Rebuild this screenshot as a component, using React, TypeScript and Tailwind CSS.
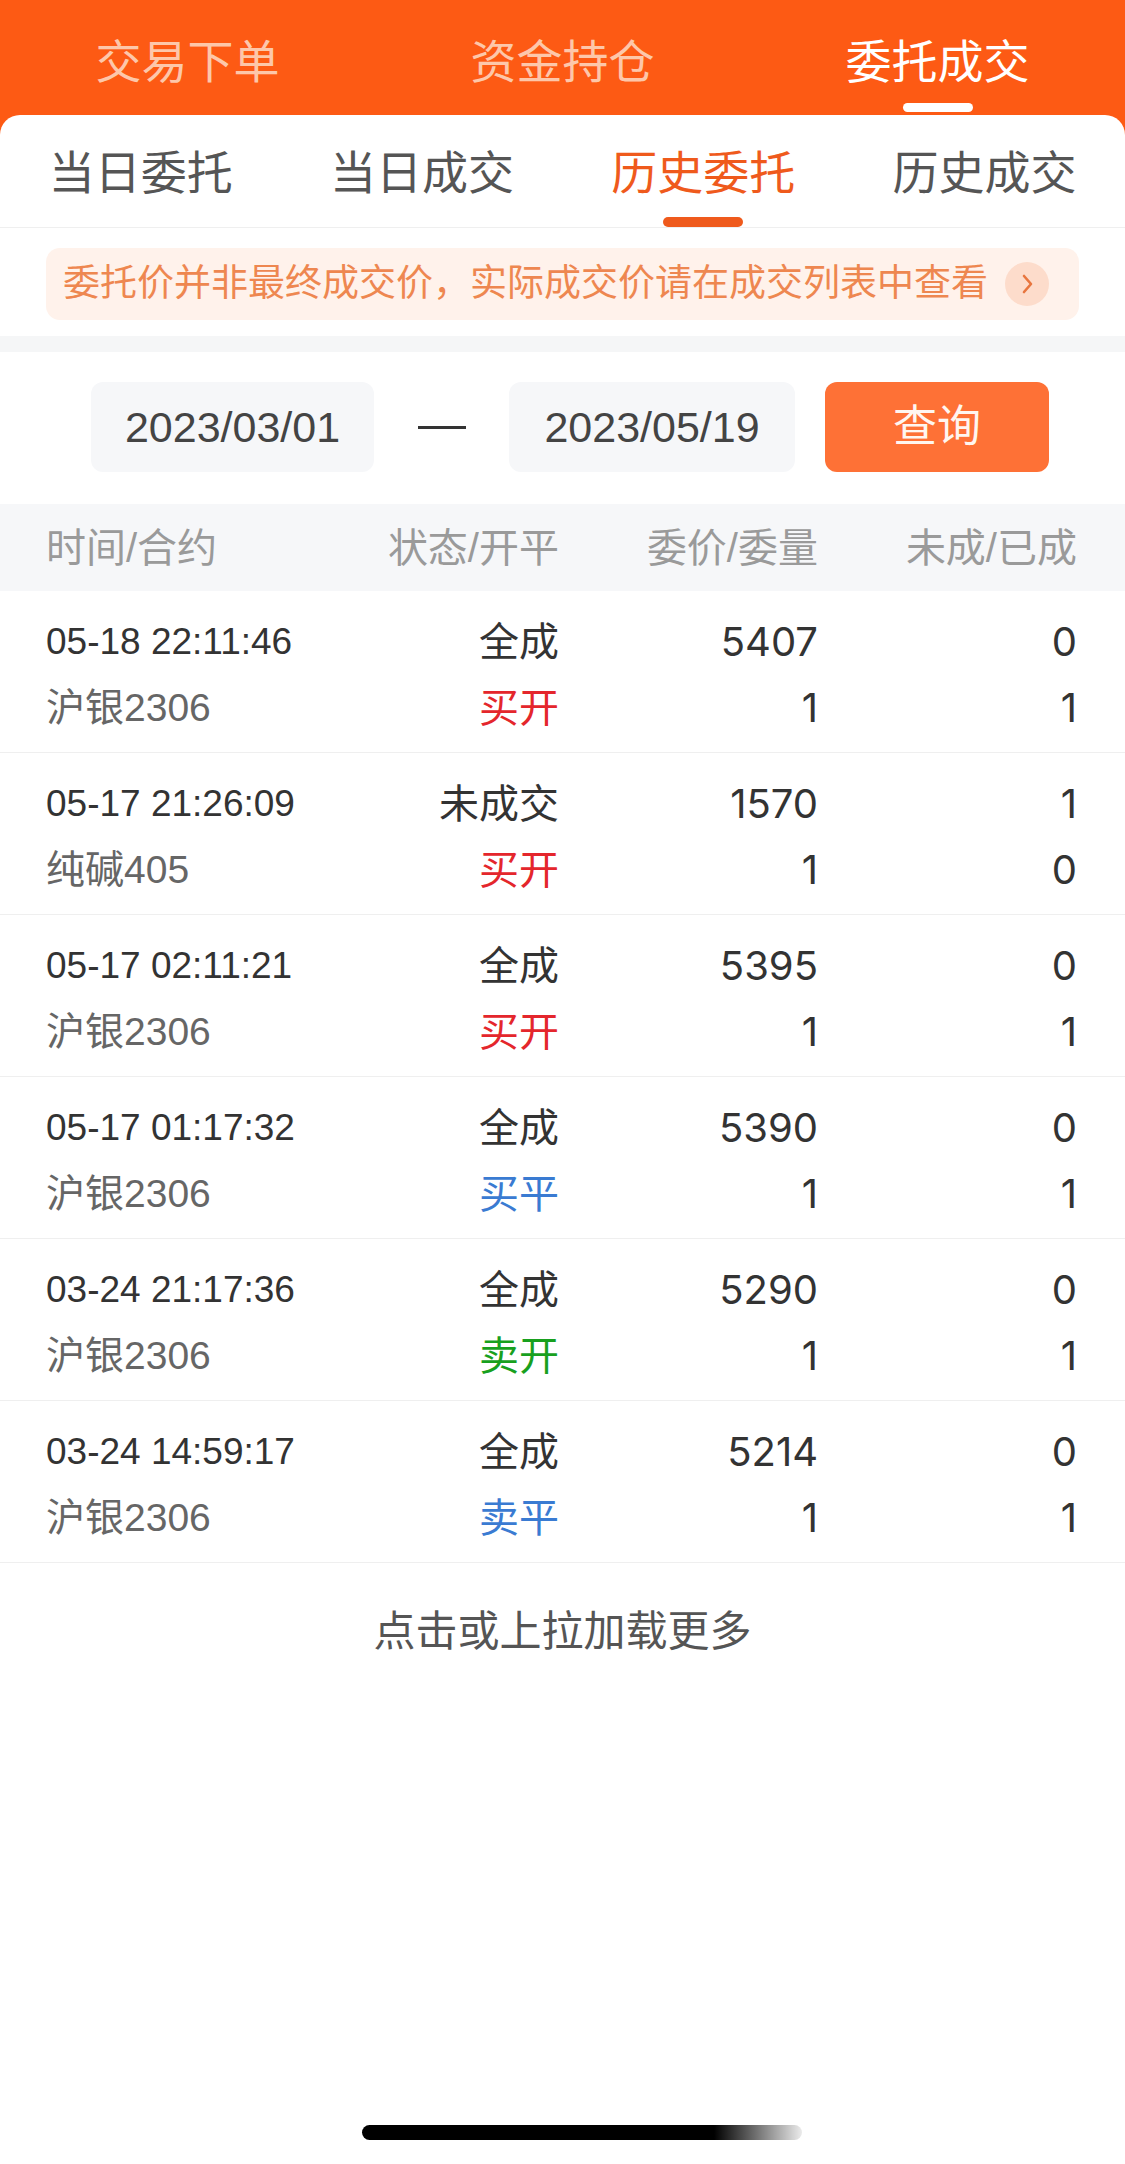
import type { ReactNode } from "react";

type Order = {
  time: string;
  contract: string;
  status: string;
  side: "买开" | "买平" | "卖开" | "卖平";
  price: string;
  qty: string;
  unfilled: string;
  filled: string;
};

const orders: Order[] = [
  { time: "05-18 22:11:46", contract: "沪银2306", status: "全成", side: "买开", price: "5407", qty: "1", unfilled: "0", filled: "1" },
  { time: "05-17 21:26:09", contract: "纯碱405", status: "未成交", side: "买开", price: "1570", qty: "1", unfilled: "1", filled: "0" },
  { time: "05-17 02:11:21", contract: "沪银2306", status: "全成", side: "买开", price: "5395", qty: "1", unfilled: "0", filled: "1" },
  { time: "05-17 01:17:32", contract: "沪银2306", status: "全成", side: "买平", price: "5390", qty: "1", unfilled: "0", filled: "1" },
  { time: "03-24 21:17:36", contract: "沪银2306", status: "全成", side: "卖开", price: "5290", qty: "1", unfilled: "0", filled: "1" },
  { time: "03-24 14:59:17", contract: "沪银2306", status: "全成", side: "卖平", price: "5214", qty: "1", unfilled: "0", filled: "1" },
];

const sideColor: Record<Order["side"], string> = {
  买开: "text-[#e4262c]",
  买平: "text-[#3a7bd2]",
  卖开: "text-[#18a01e]",
  卖平: "text-[#3a7bd2]",
};

const topTabs = ["交易下单", "资金持仓", "委托成交"];
const subTabs = ["当日委托", "当日成交", "历史委托", "历史成交"];

function Cell({ children, className = "" }: { children: ReactNode; className?: string }) {
  return <div className={`h-[66px] leading-[66px] whitespace-nowrap ${className}`}>{children}</div>;
}

export default function App() {
  return (
    <div className="w-[1125px] h-[2164px] bg-[#fd5a14] flex flex-col font-['Liberation_Sans','Noto_Sans_CJK_SC',sans-serif] overflow-hidden">
      {/* top tabs */}
      <div className="h-[115px] grid grid-cols-3">
        {topTabs.map((t, i) => (
          <div key={t} className="flex flex-col items-center pt-[34px]">
            <span
              className={`text-[46px] leading-[56px] ${i === 2 ? "text-white" : "text-[#fdc7aa]"}`}
            >
              {t}
            </span>
            {i === 2 && <div className="mt-[13px] w-[70px] h-[9px] rounded-full bg-white" />}
          </div>
        ))}
      </div>

      <div className="flex-1 bg-white rounded-t-[20px] flex flex-col">
        {/* sub tabs */}
        <div className="h-[113px] grid grid-cols-4 border-b border-[#efefef]">
          {subTabs.map((t, i) => (
            <div key={t} className="flex flex-col items-center pt-[30px]">
              <span
                className={`text-[46px] leading-[56px] ${i === 2 ? "text-[#ef5a1c]" : "text-[#555]"}`}
              >
                {t}
              </span>
              {i === 2 && <div className="mt-[16px] w-[80px] h-[10px] rounded-full bg-[#ef5a1c]" />}
            </div>
          ))}
        </div>

        {/* notice */}
        <div className="mt-[20px] mx-[46px] h-[72px] rounded-[14px] bg-[#fff2eb] flex items-center justify-between pl-[17px] pr-[30px]">
          <span className="text-[37px] text-[#ee8750] whitespace-nowrap">
            委托价并非最终成交价，实际成交价请在成交列表中查看
          </span>
          <div className="w-[44px] h-[44px] rounded-full bg-[#fddccb] flex items-center justify-center">
            <svg width="20" height="24" viewBox="0 0 20 24" fill="none">
              <path d="M7 4 L14 12 L7 20" stroke="#e8763f" strokeWidth="2.6" strokeLinecap="round" strokeLinejoin="round" />
            </svg>
          </div>
        </div>

        <div className="mt-[16px] h-[16px] bg-[#f5f6f7]" />

        {/* date range */}
        <div className="pt-[30px] pl-[91px] flex items-center">
          <div className="w-[283px] h-[90px] rounded-[12px] bg-[#f6f7f9] flex items-center justify-center text-[43px] text-[#444]">
            2023/03/01
          </div>
          <div className="w-[135px] flex justify-center">
            <div className="w-[48px] h-[3px] bg-[#333]" />
          </div>
          <div className="w-[286px] h-[90px] rounded-[12px] bg-[#f6f7f9] flex items-center justify-center text-[43px] text-[#444]">
            2023/05/19
          </div>
          <button
            type="button"
            className="ml-[30px] w-[224px] h-[90px] rounded-[12px] bg-[#fe7136] text-[44px] text-[#fff6f0] flex items-center justify-center"
          >
            查询
          </button>
        </div>

        {/* table header */}
        <div className="mt-[32px] h-[87px] bg-[#f6f7f9] grid grid-cols-[254px_259px_259px_259px] pl-[46px] items-center text-[40px] text-[#9a9a9a]">
          <div>时间/合约</div>
          <div className="text-right">状态/开平</div>
          <div className="text-right">委价/委量</div>
          <div className="text-right">未成/已成</div>
        </div>

        {/* rows */}
        {orders.map((o) => (
          <div
            key={o.time}
            className="h-[162px] pt-[18px] border-b border-[#efefef] grid grid-cols-[254px_259px_259px_259px] pl-[46px]"
          >
            <div>
              <Cell className="text-[37px] text-[#333]">{o.time}</Cell>
              <Cell className="text-[39px] text-[#666]">{o.contract}</Cell>
            </div>
            <div className="text-right text-[40px]">
              <Cell className="text-[#333]">{o.status}</Cell>
              <Cell className={sideColor[o.side]}>{o.side}</Cell>
            </div>
            <div className="text-right text-[40px] text-[#333] font-['Inter',sans-serif]">
              <Cell>{o.price}</Cell>
              <Cell>{o.qty}</Cell>
            </div>
            <div className="text-right text-[40px] text-[#333] font-['Inter',sans-serif]">
              <Cell>{o.unfilled}</Cell>
              <Cell>{o.filled}</Cell>
            </div>
          </div>
        ))}

        <div className="mt-[41px] text-center text-[42px] leading-[56px] text-[#555]">点击或上拉加载更多</div>

        <div className="flex-1" />

        {/* home indicator */}
        <div className="pl-[362px] pb-[24px]">
          <div className="w-[440px] h-[15px] rounded-full bg-[linear-gradient(to_right,#000_0%,#000_80%,rgba(0,0,0,0.08)_100%)]" />
        </div>
      </div>
    </div>
  );
}
